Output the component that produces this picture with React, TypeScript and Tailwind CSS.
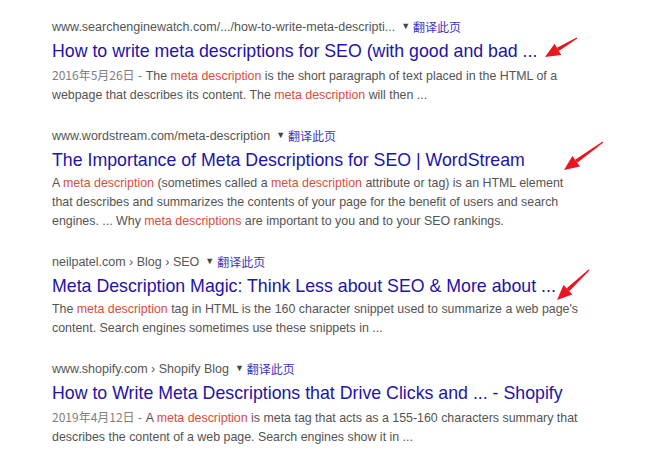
import React from 'react'

type Part = string | { hl: string }

type Result = {
  url: string
  title: string
  date?: string
  snippet: Part[]
}

const results: Result[] = [
  {
    url: 'www.searchenginewatch.com/.../how-to-write-meta-descripti...',
    title: 'How to write meta descriptions for SEO (with good and bad ...',
    date: '2016年5月26日',
    snippet: [
      'The ',
      { hl: 'meta description' },
      ' is the short paragraph of text placed in the HTML of a webpage that describes its content. The ',
      { hl: 'meta description' },
      ' will then ...',
    ],
  },
  {
    url: 'www.wordstream.com/meta-description',
    title: 'The Importance of Meta Descriptions for SEO | WordStream',
    snippet: [
      'A ',
      { hl: 'meta description' },
      ' (sometimes called a ',
      { hl: 'meta description' },
      ' attribute or tag) is an HTML element that describes and summarizes the contents of your page for the benefit of users and search engines. ... Why ',
      { hl: 'meta descriptions' },
      ' are important to you and to your SEO rankings.',
    ],
  },
  {
    url: 'neilpatel.com › Blog › SEO',
    title: 'Meta Description Magic: Think Less about SEO & More about ...',
    snippet: [
      'The ',
      { hl: 'meta description' },
      " tag in HTML is the 160 character snippet used to summarize a web page's content. Search engines sometimes use these snippets in ...",
    ],
  },
  {
    url: 'www.shopify.com › Shopify Blog',
    title: 'How to Write Meta Descriptions that Drive Clicks and ... - Shopify',
    date: '2019年4月12日',
    snippet: [
      'A ',
      { hl: 'meta description' },
      ' is meta tag that acts as a 155-160 characters summary that describes the content of a web page. Search engines show it in ...',
    ],
  },
]

const Arrow = ({ x1, y1, x2, y2 }: { x1: number; y1: number; x2: number; y2: number }) => {
  const dx = x2 - x1
  const dy = y2 - y1
  const len = Math.hypot(dx, dy)
  const ux = dx / len
  const uy = dy / len
  const nx = -uy
  const ny = ux
  const hl = 15
  const hw = 6.5
  const bx = x2 - ux * hl
  const by = y2 - uy * hl
  const tail = `${x1 + nx * 0.6},${y1 + ny * 0.6} ${x1 - nx * 0.6},${y1 - ny * 0.6} ${bx - nx * 1.9},${by - ny * 1.9} ${bx + nx * 1.9},${by + ny * 1.9}`
  const head = `${x2},${y2} ${bx + nx * hw},${by + ny * hw} ${bx - nx * hw},${by - ny * hw}`
  return (
    <g fill="#e8161e">
      <polygon points={tail} />
      <polygon points={head} />
    </g>
  )
}

export default function App() {
  return (
    <div
      className="relative w-[657px] h-[464px] bg-white overflow-hidden pl-[52px] pt-[17px]"
      style={{ fontFamily: '"Liberation Sans", Arial, "Noto Sans CJK SC", sans-serif' }}
    >
      <div className="flex flex-col gap-[21px] w-[530px]">
        {results.map((r, i) => (
          <div key={i} className="flex flex-col">
            <div className="flex items-center h-[20px] text-[12.5px] text-[#555]">
              <span>{r.url}</span>
              <span className="ml-[6px] text-[9px] text-[#444]">▼</span>
              <span
                className="ml-[3px] text-[12px] text-[#3b35c2]"
                style={{ fontFamily: '"Noto Sans CJK SC", sans-serif' }}
              >
                翻译此页
              </span>
            </div>
            <div className="h-[28px] leading-[28px] text-[17.75px] text-[#2213a8] whitespace-nowrap">{r.title}</div>
            <div className="text-[12.4px] leading-[19px] text-[#545454]">
              {r.date && (
                <span className="text-[#808080]">
                  <span style={{ fontFamily: '"Noto Sans CJK SC", sans-serif' }} className="text-[12px]">
                    {r.date}
                  </span>{' '}
                  -{' '}
                </span>
              )}
              {r.snippet.map((p, j) =>
                typeof p === 'string' ? (
                  <span key={j}>{p}</span>
                ) : (
                  <span key={j} className="text-[#dd4b39]">
                    {p.hl}
                  </span>
                )
              )}
            </div>
          </div>
        ))}
      </div>

      {/* annotation arrows */}
      <svg className="absolute inset-0 pointer-events-none" width="657" height="464" viewBox="0 0 657 464">
        <Arrow x1={577} y1={38} x2={545} y2={57} />
        <Arrow x1={603} y1={142} x2={564} y2={170} />
        <Arrow x1={589} y1={270} x2={557} y2={300} />
      </svg>
    </div>
  )
}
